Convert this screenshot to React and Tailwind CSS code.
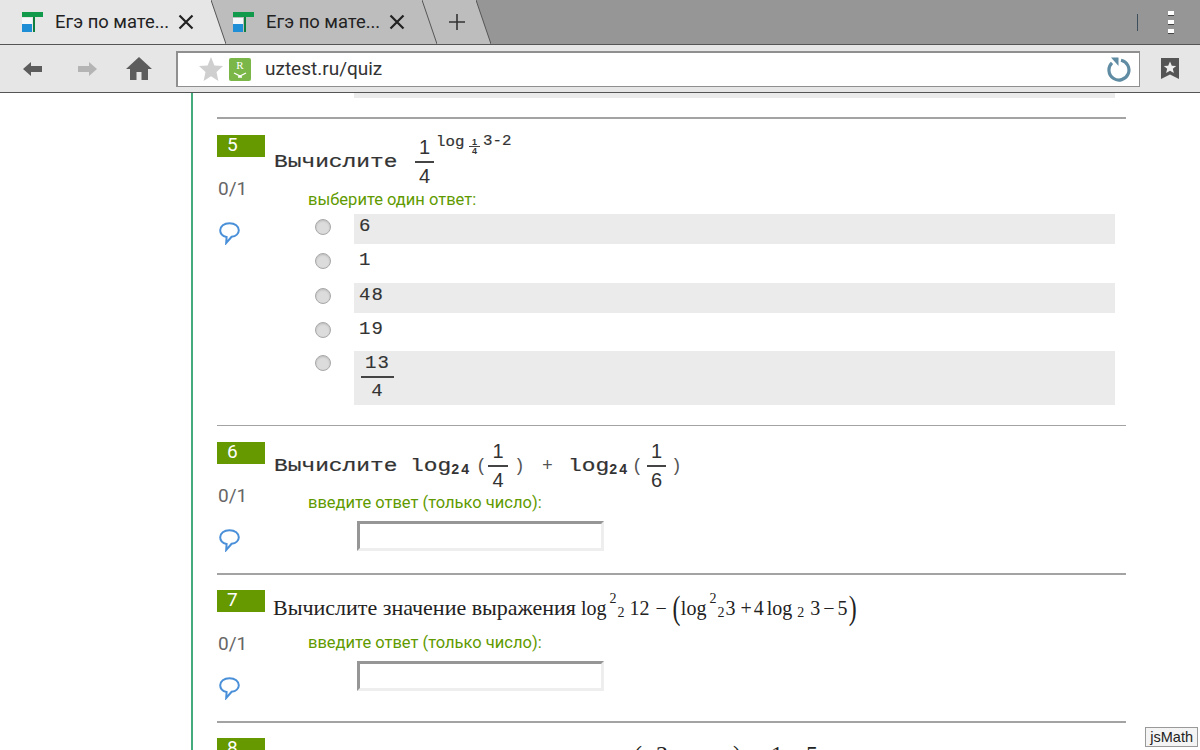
const ANSWERS = ['6', '1', '48', '19'];

function Favicon() {
  return (
    <svg width="22" height="22" viewBox="0 0 22 22" className="shrink-0">
      <rect x="0" y="1" width="21" height="5" fill="#129a4c" />
      <rect x="11" y="6" width="2" height="15" fill="#0f7f40" />
      <rect x="0" y="7" width="10" height="6" fill="#f4f8fb" />
      <rect x="0" y="13" width="10" height="8" fill="#1e8fd6" />
    </svg>
  );
}

function CloseIcon() {
  return (
    <svg width="16" height="16" viewBox="0 0 16 16" className="shrink-0">
      <path d="M1.5 1.5 14.5 14.5M14.5 1.5 1.5 14.5" stroke="#222" strokeWidth="2.2" fill="none" />
    </svg>
  );
}

function Slant({ fill, back }) {
  return (
    <svg width="15" height="44" viewBox="0 0 15 44" className="shrink-0 block">
      <rect width="15" height="44" fill={back} />
      <path d="M0 0 15 44H0Z" fill={fill} />
      <path d="M0 0 15 44" stroke="#555" strokeWidth="1" fill="none" />
    </svg>
  );
}

function Tab({ active }) {
  return (
    <div className={`flex h-[44px] items-center ${active ? 'w-[211px] bg-[#e6e6e6] pl-[22px]' : 'w-[196px] bg-[#bdbdbd] pl-[7px]'}`}>
      <Favicon />
      <span className="ml-[11px] w-[123px] whitespace-nowrap text-[18.4px] text-[#222]">Егэ по мате...</span>
      <CloseIcon />
    </div>
  );
}

function Toolbar() {
  return (
    <div className="flex h-[49px] items-center border-y border-y-[#555] bg-[#e6e6e6]">
      <svg width="20" height="14" viewBox="0 0 20 14" className="ml-[23px]">
        <path d="M0 7 8 0V4H19V10H8V14Z" fill="#5c5c5c" />
      </svg>
      <svg width="20" height="14" viewBox="0 0 20 14" className="ml-[35px]">
        <path d="M19 7 11 0V4H0V10H11V14Z" fill="#b4b4b4" />
      </svg>
      <svg width="26" height="24" viewBox="0 0 26 24" className="ml-[28px]">
        <path d="M13 0 26 12H22V23H15.5V15H10.5V23H4V12H0Z" fill="#5c5c5c" />
      </svg>
      <div className="ml-[24px] flex h-[36px] w-[964px] items-center border-2 border-[#8f8f8f] border-r border-b bg-white">
        <svg width="24" height="24" viewBox="0 0 24 24" className="ml-[21px]">
          <path d="M12 0 15.4 8.4 24 9.1 17.5 14.9 19.4 24 12 19.2 4.6 24 6.5 14.9 0 9.1 8.6 8.4Z" fill="#cfcfcf" />
        </svg>
        <div className="ml-[6px] flex h-[23px] w-[22px] flex-col items-center rounded-[2px] bg-[#7ab648] text-white">
          <span className="text-[11px] leading-[14px] [font-family:'Liberation_Serif',serif]">R</span>
          <svg width="14" height="6" viewBox="0 0 14 6">
            <path d="M1 1 7 4 13 1M5 5H9" stroke="#fff" strokeWidth="1.3" fill="none" />
          </svg>
        </div>
        <span className="ml-[14px] text-[19px] text-[#333]">uztest.ru/quiz</span>
        <svg width="24" height="25" viewBox="0 0 24 25" className="ml-auto mr-[8px]">
          <path d="M5 5.8A10 10 0 1 0 14 3.2" stroke="#5f8ca3" strokeWidth="3.2" fill="none" />
          <path d="M4 0.5H11.5V9Z" fill="#5f8ca3" />
        </svg>
      </div>
      <svg width="18" height="22" viewBox="0 0 18 22" className="ml-[21px]">
        <path d="M0 0H18V21L9 16.5 0 21Z" fill="#555" />
        <path d="M9 3.5 10.8 7.7 15.2 8 11.8 10.8 12.9 15 9 12.7 5.1 15 6.2 10.8 2.8 8 7.2 7.7Z" fill="#eee" />
      </svg>
    </div>
  );
}

function Comment() {
  return (
    <svg width="21" height="23" viewBox="0 0 21 23" className="ml-[2px] mt-[22px]">
      <path
        d="M10.5 1.2C5 1.2 1.2 4.2 1.2 8.3c0 3.4 2.6 6 6.4 6.7l-.4 6 5.4-6.2c4.4-.5 7.2-3.2 7.2-6.5 0-4.1-3.8-7.1-9.3-7.1Z"
        stroke="#4a90d9"
        strokeWidth="2"
        fill="none"
      />
    </svg>
  );
}

function Badge({ n }) {
  return <div className="h-[22px] w-[48px] bg-[#669900] pl-[10px] text-[19px] leading-[20px] text-white">{n}</div>;
}

function Side({ n }) {
  return (
    <div className="w-[57px] shrink-0">
      <Badge n={n} />
      <div className="ml-px mt-[21px] text-[19px] leading-[22px] text-[#666]">0/1</div>
      <Comment />
    </div>
  );
}

// stretched mono text, the formula pictures in the page are wider than the font
function Wide({ children, width }) {
  return (
    <span className={`inline-block shrink-0 origin-left scale-x-[1.27] whitespace-nowrap text-[18px] leading-[20px] text-[#333] [font-family:'Liberation_Mono',monospace] [-webkit-text-stroke:0.2px_#333] ${width}`}>
      {children}
    </span>
  );
}

function Frac({ top, bottom, width }) {
  return (
    <span className={`inline-flex shrink-0 flex-col items-center text-[#333] ${width}`}>
      <span className="text-[20px] leading-[27px] [font-family:'Liberation_Sans',sans-serif]">{top}</span>
      <span className="h-[2px] w-full bg-[#444]" />
      <span className="text-[20px] leading-[27px] [font-family:'Liberation_Sans',sans-serif]">{bottom}</span>
    </span>
  );
}

function Label({ children, className }) {
  return <div className={`ml-[34px] text-[16.5px] leading-[22px] text-[#5f9a00] ${className}`}>{children}</div>;
}

function NumberInput({ className }) {
  return (
    <div className={`ml-[83px] h-[30px] w-[247px] border-[3px] border-t-[#969696] border-r-[#eeeeee] border-b-[#eeeeee] border-l-[#969696] bg-white ${className}`} />
  );
}

function Radio() {
  return <div className="h-4 w-4 shrink-0 rounded-full border border-[#a8a8a8] bg-[#dcdcdc] shadow-[inset_0_1px_2px_#bbb]" />;
}

function AnswerRow({ text, shaded }) {
  return (
    <div className="ml-[41px] flex h-[30px] items-start">
      <div className="mt-[5px]"><Radio /></div>
      <div className={`ml-[23px] h-[30px] w-[761px] pl-[5px] text-[19px] leading-[24px] tracking-[1.2px] text-[#333] [font-family:'Liberation_Mono',monospace] [-webkit-text-stroke:0.15px_#333] ${shaded ? 'bg-[#ebebeb]' : ''}`}>
        {text}
      </div>
    </div>
  );
}

function Question5() {
  return (
    <div className="flex h-[308px] border-t-2 border-t-[#a3a3a3] pt-[16px]">
      <Side n="5" />
      <div className="flex-1">
        <div className="flex h-[54px] items-center">
          <Wide width="w-[122px]">Вычислите</Wide>
          <span className="ml-[19px]"><Frac top="1" bottom="4" width="w-[19px]" /></span>
          <div className="ml-[4px] flex items-start self-start pt-[1px]">
            <Wide width="-ml-[2px] w-[32px] mt-[-3px] !scale-x-[1.05] !text-[15px]">log</Wide>
            <span className="ml-[1px] mt-[2px] flex w-[11px] flex-col items-center text-[9px] font-bold leading-[8px] text-[#333] [font-family:'Liberation_Sans',sans-serif]">
              <span>1</span>
              <span className="h-px w-full bg-[#444]" />
              <span>4</span>
            </span>
            <Wide width="ml-[3px] w-[27px] mt-[-4px] !scale-x-[1.05] !text-[15px]">3-2</Wide>
          </div>
        </div>
        <Label>выберите один ответ:</Label>
        <div className="mt-[3px] flex flex-col gap-[4.3px]">
          {ANSWERS.map((a, i) => (
            <AnswerRow key={a} text={a} shaded={i % 2 === 0} />
          ))}
          <div className="ml-[41px] flex items-start">
            <div className="mt-[4px]"><Radio /></div>
            <div className="ml-[23px] flex h-[54px] w-[761px] bg-[#ebebeb] pl-[7px]">
              <span className="flex h-full w-[33px] flex-col items-center text-[19px] tracking-[1.2px] text-[#333] [font-family:'Liberation_Mono',monospace] [-webkit-text-stroke:0.15px_#333]">
                <span className="leading-[25px]">13</span>
                <span className="h-[2px] w-full bg-[#444]" />
                <span className="leading-[27px]">4</span>
              </span>
            </div>
          </div>
        </div>
      </div>
    </div>
  );
}

function Log24() {
  return (
    <>
      <Wide width="w-[41px]">log</Wide>
      <span className="mb-[13px] w-[24px] self-end text-[14px] font-bold leading-[14px] tracking-[1.5px] text-[#333] [font-family:'Liberation_Mono',monospace]">24</span>
    </>
  );
}

function Paren({ children, className }) {
  return <span className={`text-[18px] text-[#555] [font-family:'Liberation_Mono',monospace] ${className}`}>{children}</span>;
}

function Question6() {
  return (
    <div className="flex h-[148px] border-t border-t-[#a3a3a3] pt-[16px]">
      <Side n="6" />
      <div className="flex-1">
        <div className="flex h-[48px] items-center">
          <Wide width="w-[122px]">Вычислите</Wide>
          <span className="ml-[14px] flex h-full items-center">
            <Log24 />
            <Paren className="ml-px w-[12px]">(</Paren>
            <Frac top="1" bottom="4" width="w-[20px]" />
            <Paren className="ml-[6px] w-[28px]">)</Paren>
            <Paren className="w-[26px]">+</Paren>
            <Log24 />
            <Paren className="-ml-[1px] w-[15px]">(</Paren>
            <Frac top="1" bottom="6" width="w-[19px]" />
            <Paren className="ml-[5px]">)</Paren>
          </span>
        </div>
        <Label className="mt-[2px]">введите ответ (только число):</Label>
        <NumberInput className="mt-[7px]" />
      </div>
    </div>
  );
}

function LogSquared() {
  return (
    <>
      <span>log</span>
      <span className="relative -top-[9px] ml-[3px] w-[8px] text-[14px]">2</span>
      <span className="relative top-[5px] w-[8px] text-[14px]">2</span>
    </>
  );
}

function Question7() {
  return (
    <div className="flex h-[148px] border-t-2 border-t-[#a3a3a3] pt-[15px]">
      <Side n="7" />
      <div className="flex-1">
        <div className="-ml-px flex h-[36px] items-center whitespace-nowrap text-[20px] leading-[24px] text-[#222] [font-family:'Liberation_Serif',serif]">
          <span className="w-[308px] text-[22px]">Вычислите значение выражения</span>
          <LogSquared />
          <span className="ml-[4px]">12</span>
          <span className="ml-[6px]">−</span>
          <span className="ml-[4px] w-[10px] scale-x-[0.7] text-[34px] leading-[32px]">(</span>
          <LogSquared />
          <span>3</span>
          <span className="ml-[5px]">+</span>
          <span className="ml-[2px]">4</span>
          <span className="ml-[3px]">log</span>
          <span className="relative top-[5px] ml-[5px] w-[8px] text-[14px]">2</span>
          <span className="ml-[5px]">3</span>
          <span className="ml-[3px]">−</span>
          <span className="ml-[3px]">5</span>
          <span className="-ml-[1px] scale-x-[0.7] text-[34px] leading-[32px]">)</span>
        </div>
        <Label className="mt-[6px]">введите ответ (только число):</Label>
        <NumberInput className="mt-[7px]" />
      </div>
    </div>
  );
}

function Question8() {
  return (
    <div className="flex border-t-2 border-t-[#a3a3a3] pt-[15px]">
      <Side n="8" />
      <div className="flex flex-1 pl-[360px] pt-[2px] text-[24px] leading-[28px] text-[#222] [font-family:'Liberation_Serif',serif]">
        <span className="w-[22px]">(</span>
        <span className="w-[77px]">2</span>
        <span className="w-[38px]">)</span>
        <span className="w-[35px]">1</span>
        <span>5</span>
      </div>
    </div>
  );
}

export default function App() {
  return (
    <div className="relative h-[750px] w-[1200px] overflow-hidden bg-white [font-family:Roboto,sans-serif]">
      <div className="flex h-[44px] items-center bg-[#969696]">
        <Tab active />
        <Slant fill="#e6e6e6" back="#bdbdbd" />
        <Tab />
        <Slant fill="#bdbdbd" back="#bdbdbd" />
        <div className="flex h-[44px] w-[39px] items-center justify-center bg-[#bdbdbd]">
          <svg width="16" height="16" viewBox="0 0 16 16">
            <path d="M8 0V16M0 8H16" stroke="#333" strokeWidth="1.6" fill="none" />
          </svg>
        </div>
        <Slant fill="#bdbdbd" back="#969696" />
        <div className="ml-auto mr-[30px] h-[17px] w-px bg-[#3d4f5c]" />
        <div className="mr-[26px] flex flex-col gap-[4px]">
          <span className="h-[5px] w-[6px] border-b border-b-[#444] bg-white" />
          <span className="h-[5px] w-[6px] border-b border-b-[#444] bg-white" />
          <span className="h-[5px] w-[6px] border-b border-b-[#444] bg-white" />
        </div>
      </div>
      <Toolbar />
      <div className="ml-[191px] h-[657px] w-[935px] border-l-2 border-l-[#45ab7d]">
        <div className="ml-[161px] h-[5px] w-[761px] bg-[#ebebeb]" />
        <div className="ml-[24px] mt-[19px]">
          <Question5 />
          <Question6 />
          <Question7 />
          <Question8 />
        </div>
      </div>
      <div className="absolute bottom-[3px] right-[2px] border border-[#999] bg-[#f4f4f4] px-[4px] text-[14.5px] leading-[18px] text-[#222] [font-family:'Liberation_Sans',sans-serif]">
        jsMath
      </div>
    </div>
  );
}
